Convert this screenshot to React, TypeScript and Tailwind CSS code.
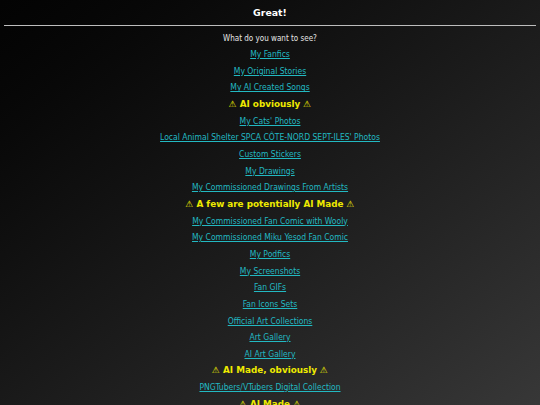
const items: { label: string; warn?: boolean }[] = [
  { label: "My Fanfics" },
  { label: "My Original Stories" },
  { label: "My AI Created Songs" },
  { label: "⚠ AI obviously ⚠", warn: true },
  { label: "My Cats' Photos" },
  { label: "Local Animal Shelter SPCA CÔTE-NORD SEPT-ILES' Photos" },
  { label: "Custom Stickers" },
  { label: "My Drawings" },
  { label: "My Commissioned Drawings From Artists" },
  { label: "⚠ A few are potentially AI Made ⚠", warn: true },
  { label: "My Commissioned Fan Comic with Wooly" },
  { label: "My Commissioned Miku Yesod Fan Comic" },
  { label: "My Podfics" },
  { label: "My Screenshots" },
  { label: "Fan GIFs" },
  { label: "Fan Icons Sets" },
  { label: "Official Art Collections" },
  { label: "Art Gallery" },
  { label: "AI Art Gallery" },
  { label: "⚠ AI Made, obviously ⚠", warn: true },
  { label: "PNGTubers/VTubers Digital Collection" },
  { label: "⚠ AI Made ⚠", warn: true },
];

export default function App() {
  return (
    <div className="min-h-screen overflow-hidden bg-gradient-to-br from-[#030303] to-[#383838] font-['DejaVu_Sans_Condensed','DejaVu_Sans',sans-serif] text-[#e5e5e5]">
      <h1 className="pt-[5px] text-center font-['DejaVu_Sans',sans-serif] text-[9.4px] font-bold leading-[15px] text-white">
        Great!
      </h1>
      <hr className="mx-1 mt-[5px] border-t border-[#bdbdbd]" />
      <p className="mt-[7px] text-center text-[8px] leading-[11px]">What do you want to see?</p>
      <ul className="mt-[2px] text-center">
        {items.map((item) => (
          <li key={item.label} className="h-[16.67px] leading-[11px]">
            {item.warn ? (
              <span className="font-['DejaVu_Sans',sans-serif] text-[8.8px] font-bold text-[#eeea00]">{item.label}</span>
            ) : (
              <a href="#" className="text-[8.5px] text-[#22b9c2] underline">
                {item.label}
              </a>
            )}
          </li>
        ))}
      </ul>
    </div>
  );
}
